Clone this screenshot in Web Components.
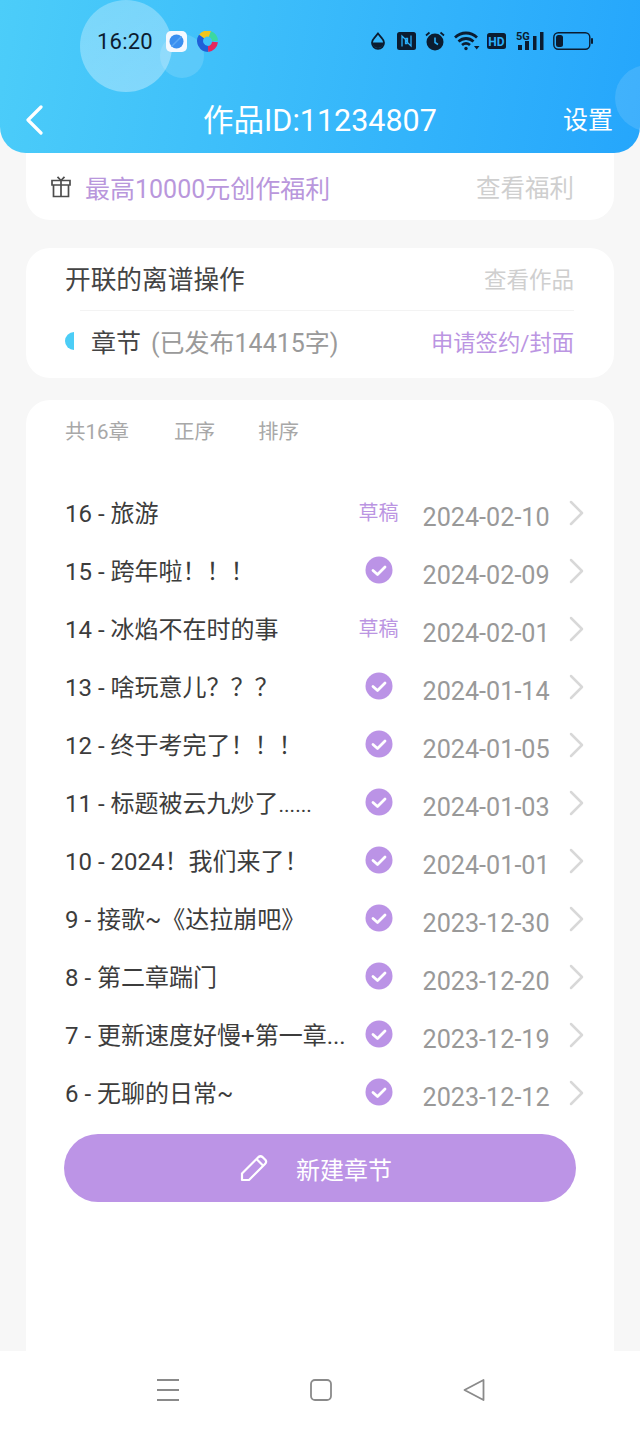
<!DOCTYPE html>
<html lang="zh">
<head>
<meta charset="utf-8">
<title>作品</title>
<style>
  html, body { margin: 0; height: 1429px; overflow: hidden; }
  body {
    display: flex;
    flex-direction: column;
    background: #f7f7f7;
    font-family: Roboto, "Noto Sans CJK SC", sans-serif;
  }
</style>
</head>
<body>
<app-header title="作品ID:11234807" action="设置"></app-header>
<page-body>
  <promo-card label="最高10000元创作福利" action="查看福利"></promo-card>
  <work-card name="开联的离谱操作" action="查看作品" stats="(已发布14415字)" apply="申请签约/封面"></work-card>
  <chapter-list total="共16章">
    <chapter-row date="2024-02-10" draft>16 - 旅游</chapter-row>
    <chapter-row date="2024-02-09">15 - 跨年啦！！！</chapter-row>
    <chapter-row date="2024-02-01" draft>14 - 冰焰不在时的事</chapter-row>
    <chapter-row date="2024-01-14">13 - 啥玩意儿？？？</chapter-row>
    <chapter-row date="2024-01-05">12 - 终于考完了！！！</chapter-row>
    <chapter-row date="2024-01-03">11 - 标题被云九炒了<small>......</small></chapter-row>
    <chapter-row date="2024-01-01">10 - 2024！我们来了！</chapter-row>
    <chapter-row date="2023-12-30">9 - 接歌~《达拉崩吧》</chapter-row>
    <chapter-row date="2023-12-20">8 - 第二章踹门</chapter-row>
    <chapter-row date="2023-12-19">7 - 更新速度好慢+第一章...</chapter-row>
    <chapter-row date="2023-12-12">6 - 无聊的日常~</chapter-row>
    <new-button slot="footer">新建章节</new-button>
  </chapter-list>
</page-body>
<nav-bar></nav-bar>

<script>
'use strict'

// small helper, every element here is just a shadow root + a string of markup
const shadow = (el, html) => {
  el.attachShadow({ mode: 'open' }).innerHTML = html
}
const attr = (el, name) => el.getAttribute(name) || ''

customElements.define('status-bar', class extends HTMLElement {
  connectedCallback() {
    shadow(this, `
      <style>
        :host { display: flex; align-items: center; height: 82px; padding: 0 47px 0 97px; color: #0b1c30; }
        .time { font-size: 22px; width: 69px; letter-spacing: .2px; }
        .apps { display: flex; gap: 10px; }
        .icons { margin-left: auto; display: flex; align-items: center; }
        svg { display: block; }
      </style>
      <span class="time">16:20</span>
      <div class="apps">
        <svg width="21" height="21" viewBox="0 0 21 21">
          <rect width="21" height="21" rx="5" fill="#f4f9ff"/>
          <circle cx="10.5" cy="10.5" r="7" fill="#3a8ff0"/>
          <path d="M5.500 15.500L15.500 5.500" stroke="#5aa8f6" stroke-width="1.500"/>
        </svg>
        <svg width="21" height="21" viewBox="0 0 21 21" fill="none" stroke-width="6">
          <path d="M4.500 5.500A8 8 0 0 1 13 3" stroke="#f2c51c"/>
          <path d="M13 3A8 8 0 0 1 18 10" stroke="#3cd8a0"/>
          <path d="M18 11A8 8 0 0 1 11 18" stroke="#e5265f"/>
          <path d="M11 18A8 8 0 0 1 4.500 5.500" stroke="#1f5fd8"/>
        </svg>
      </div>
      <div class="icons">
        <svg width="14" height="18" viewBox="0 0 14 18" style="margin-right:12px">
          <path d="M7 1.500L11.200 6.600A6 6 0 1 1 2.800 6.600Z" fill="none" stroke="currentColor" stroke-width="1.800"/>
          <path d="M1.500 10.500h11a5.500 5.500 0 0 1-11 0Z" fill="currentColor"/>
        </svg>
        <svg width="19" height="18" viewBox="0 0 19 18" style="margin-right:9px">
          <rect width="19" height="18" rx="2.500" fill="currentColor"/>
          <path d="M5 14.500V4L10.500 9.500V6.500H8.500M14 3.500V14L8.500 8.500V11.500H10.500" fill="none" stroke="#2bb0fb" stroke-width="1.300"/>
        </svg>
        <svg width="20" height="20" viewBox="0 0 20 20" style="margin-right:9px">
          <circle cx="10" cy="11" r="8.500" fill="currentColor"/>
          <path d="M1 4.500L4.500 1.500M19 4.500L15.500 1.500" stroke="currentColor" stroke-width="1.800"/>
          <path d="M10 6.500V11.500L13 13.500" fill="none" stroke="#2bb0fb" stroke-width="1.600"/>
        </svg>
        <svg width="26" height="20" viewBox="0 0 26 20" fill="none" stroke="currentColor" stroke-width="2.800" style="margin-right:7px">
          <path d="M1 6.500C7.500 .5 16.500 .5 23 6.500"/>
          <path d="M4.500 10.500C9 6.500 15 6.500 19.500 10.500"/>
          <path d="M8 14C10.500 12 13.500 12 16 14"/>
          <circle cx="12" cy="17.500" r="1.700" fill="currentColor" stroke="none"/>
          <path d="M20 15h5.500L22.700 18.500Z" fill="currentColor" stroke="none"/>
        </svg>
        <svg width="19" height="16" viewBox="0 0 19 16" style="margin-right:10px">
          <rect width="19" height="16" rx="2.500" fill="currentColor"/>
          <text x="9.500" y="12.500" text-anchor="middle" font-size="12" font-weight="700" font-family="Roboto, sans-serif" fill="#2bb0fb">HD</text>
        </svg>
        <svg width="28" height="20" viewBox="0 0 28 20" style="margin-right:9px">
          <text x="0" y="8.500" font-size="11" font-weight="700" font-family="Roboto, sans-serif" fill="currentColor">5G</text>
          <rect x="2" y="14" width="4" height="5" fill="currentColor"/>
          <rect x="9" y="10" width="4" height="9" fill="currentColor"/>
          <rect x="17" y="5" width="3.500" height="14" fill="currentColor"/>
          <rect x="24" y="1" width="3.500" height="18" fill="currentColor"/>
        </svg>
        <svg width="40" height="18" viewBox="0 0 40 18">
          <rect x=".8" y=".8" width="36" height="16.400" rx="4.500" fill="none" stroke="currentColor" stroke-width="1.400"/>
          <rect x="3" y="3" width="7" height="12" rx="2.500" fill="currentColor"/>
          <rect x="38" y="6" width="2" height="6" rx="1" fill="currentColor"/>
        </svg>
      </div>
    `)
  }
})

customElements.define('app-header', class extends HTMLElement {
  connectedCallback() {
    shadow(this, `
      <style>
        :host {
          display: block;
          position: relative;
          z-index: 2;
          flex: none;
          height: 153px;
          overflow: hidden;
          border-radius: 0 0 26px 26px;
          background: linear-gradient(100deg, #4ccdf9, #25a6fc);
        }
        .bubble { position: absolute; border-radius: 50%; }
        .b1 { left: 80px; top: 0; width: 92px; height: 92px; background: linear-gradient(160deg, rgba(255,255,255,.28), rgba(255,255,255,.34)); }
        .b2 { left: 160px; top: 34px; width: 44px; height: 44px; background: rgba(255,255,255,.14); }
        .b3 { left: 615px; top: 65px; width: 66px; height: 66px; background: rgba(255,255,255,.12); }
        .bar { position: relative; height: 71px; padding-top: 1px; box-sizing: border-box; display: flex; align-items: center; justify-content: center; color: #fff; }
        status-bar { position: relative; }
        h1 { margin: 0; font-weight: 400; font-size: 30.500px; }
        .back { position: absolute; left: 26px; top: 23px; }
        .action { position: absolute; right: 27px; top: 21px; font-size: 25px; line-height: 36px; }
      </style>
      <div class="bubble b1"></div>
      <div class="bubble b2"></div>
      <div class="bubble b3"></div>
      <status-bar></status-bar>
      <div class="bar">
        <svg class="back" width="18" height="30" viewBox="0 0 18 30" fill="none" stroke="#fff" stroke-width="3.200" stroke-linecap="round" stroke-linejoin="round">
          <path d="M15 2L2 15L15 28"/>
        </svg>
        <h1>${attr(this, 'title')}</h1>
        <span class="action">${attr(this, 'action')}</span>
      </div>
    `)
  }
})

customElements.define('page-body', class extends HTMLElement {
  connectedCallback() {
    shadow(this, `
      <style>
        :host { display: flex; flex-direction: column; flex: 1; min-height: 0; margin-top: -30px; padding: 0 26px; }
      </style>
      <slot></slot>
    `)
  }
})

customElements.define('promo-card', class extends HTMLElement {
  connectedCallback() {
    shadow(this, `
      <style>
        :host {
          display: flex;
          align-items: center;
          flex: none;
          height: 97px;
          padding: 30px 40px 0 25px;
          box-sizing: border-box;
          margin-bottom: 28px;
          background: #fff;
          border-radius: 0 0 24px 24px;
        }
        svg { margin-right: 14px; }
        .label { color: #b997dc; font-size: 25px; }
        .action { margin-left: auto; color: #cfcfcf; font-size: 24.500px; }
      </style>
      <svg width="20" height="22" viewBox="0 0 20 22" fill="none" stroke="#4d4d4d" stroke-width="1.700">
        <path d="M1 4.500H19V9H1ZM2.500 9V20.500H17.500V9M10 4.500V20.500"/>
        <path d="M10 4.500L6.500 .8M10 4.500L13.500 .8"/>
      </svg>
      <span class="label">${attr(this, 'label')}</span>
      <span class="action">${attr(this, 'action')}</span>
    `)
  }
})

customElements.define('work-card', class extends HTMLElement {
  connectedCallback() {
    shadow(this, `
      <style>
        :host {
          display: block;
          flex: none;
          height: 130px;
          margin-bottom: 22px;
          padding: 0 40px 0 39px;
          background: #fff;
          border-radius: 24px;
        }
        .row { display: flex; align-items: center; }
        .top { position: relative; height: 62px; padding-bottom: 3px; box-sizing: border-box; font-size: 25.700px; color: #444; }
        .rule { height: 1px; margin-left: 15px; background: #f3f3f3; }
        .bottom { height: 62px; padding-bottom: 2px; box-sizing: border-box; font-size: 25px; color: #444; }
        .hint { margin-left: auto; font-size: 22.500px; color: #cfcfcf; }
        .dot { width: 9px; height: 18px; margin-right: 17px; border-radius: 9px 0 0 9px; background: #4ccdf6; }
        .stats { margin-left: 10px; font-size: 25px; color: #9a9a9a; }
        .apply { margin-left: auto; font-size: 22.300px; color: #bb95e2; }
      </style>
      <div class="row top">
        <span>${attr(this, 'name')}</span>
        <span class="hint">${attr(this, 'action')}</span>
      </div>
      <div class="rule"></div>
      <div class="row bottom">
        <span class="dot"></span>
        <span>章节</span>
        <span class="stats">${attr(this, 'stats')}</span>
        <span class="apply">${attr(this, 'apply')}</span>
      </div>
    `)
  }
})

customElements.define('chapter-list', class extends HTMLElement {
  connectedCallback() {
    shadow(this, `
      <style>
        :host {
          display: block;
          flex: 1;
          min-height: 0;
          padding: 0 38px;
          background: #fff;
          border-radius: 24px 24px 0 0;
        }
        .tools { display: flex; align-items: center; height: 60px; margin-bottom: 24px; padding-left: 1px; font-size: 20.500px; color: #a8a8a8; }
        .tools span:nth-child(1) { width: 109px; }
        .tools span:nth-child(2) { width: 84px; }
        .foot { display: block; margin-top: 12px; }
      </style>
      <div class="tools">
        <span>${attr(this, 'total')}</span>
        <span>正序</span>
        <span>排序</span>
      </div>
      <slot></slot>
      <div class="foot"><slot name="footer"></slot></div>
    `)
  }
})

customElements.define('chapter-row', class extends HTMLElement {
  connectedCallback() {
    const state = this.hasAttribute('draft')
      ? '<span class="draft">草稿</span>'
      : `<svg width="28" height="28" viewBox="0 0 28 28">
           <circle cx="14" cy="14" r="13.500" fill="#bb93e6"/>
           <path d="M8 14.500L12.500 18.500L20 11" fill="none" stroke="#fff" stroke-width="2.800" stroke-linecap="round" stroke-linejoin="round"/>
         </svg>`
    shadow(this, `
      <style>
        :host {
          display: grid;
          grid-template-columns: 274.500px 78px auto 1fr;
          align-items: center;
          height: 58px;
          padding-left: 1px;
        }
        .name { margin-top: -4px; font-size: 24px; color: #3c3c3c; white-space: nowrap; }
        ::slotted(small) { font-size: 21px; }
        .state { display: flex; justify-content: center; width: 78px; margin-top: -3px; }
        .draft { font-size: 20px; color: #bb95e2; }
        .date { padding-top: 8px; font-size: 25.200px; color: #999; margin-left: 5px; }
        svg.chev { justify-self: end; margin-right: -8px; }
      </style>
      <span class="name"><slot></slot></span>
      <span class="state">${state}</span>
      <span class="date">${attr(this, 'date')}</span>
      <svg class="chev" width="16" height="26" viewBox="0 0 16 26" fill="none" stroke="#d8d8d8" stroke-width="2.500" stroke-linecap="round" stroke-linejoin="round">
        <path d="M3 2L14 13L3 24"/>
      </svg>
    `)
  }
})

customElements.define('new-button', class extends HTMLElement {
  connectedCallback() {
    shadow(this, `
      <style>
        :host {
          display: flex;
          align-items: center;
          justify-content: center;
          gap: 28px;
          height: 68px;
          padding-right: 8px;
          box-sizing: border-box;
          border-radius: 34px;
          background: #bc94e6;
          color: #fff;
          font-size: 24px;
        }
      </style>
      <svg width="28" height="28" viewBox="0 0 28 28" fill="none" stroke="#fff" stroke-width="2.200" stroke-linejoin="round">
        <path d="M2 26V19.500L18.500 3Q20.500 1.500 22.500 3L25.500 6Q27 8 25 10L9 26Z"/>
        <path d="M16.500 5L23 11.500"/>
      </svg>
      <slot></slot>
    `)
  }
})

customElements.define('nav-bar', class extends HTMLElement {
  connectedCallback() {
    shadow(this, `
      <style>
        :host {
          display: grid;
          grid-template-columns: repeat(3, 153px);
          justify-items: center;
          justify-content: start;
          align-items: center;
          flex: none;
          height: 78px;
          padding-left: 91px;
          background: #fff;
        }
        svg { display: block; }
      </style>
      <svg width="24" height="24" viewBox="0 0 24 24" stroke="#8a8a8a" stroke-width="1.800">
        <path d="M1 2H23M1 12H23M1 22H23"/>
      </svg>
      <svg width="24" height="24" viewBox="0 0 24 24" fill="none" stroke="#8a8a8a" stroke-width="1.800">
        <rect x="2" y="2" width="20" height="20" rx="4"/>
      </svg>
      <svg width="24" height="24" viewBox="0 0 24 24" fill="none" stroke="#8a8a8a" stroke-width="1.800" stroke-linejoin="round">
        <path d="M2.500 12L21.500 2V22Z"/>
      </svg>
    `)
  }
})
</script>
</body>
</html>
